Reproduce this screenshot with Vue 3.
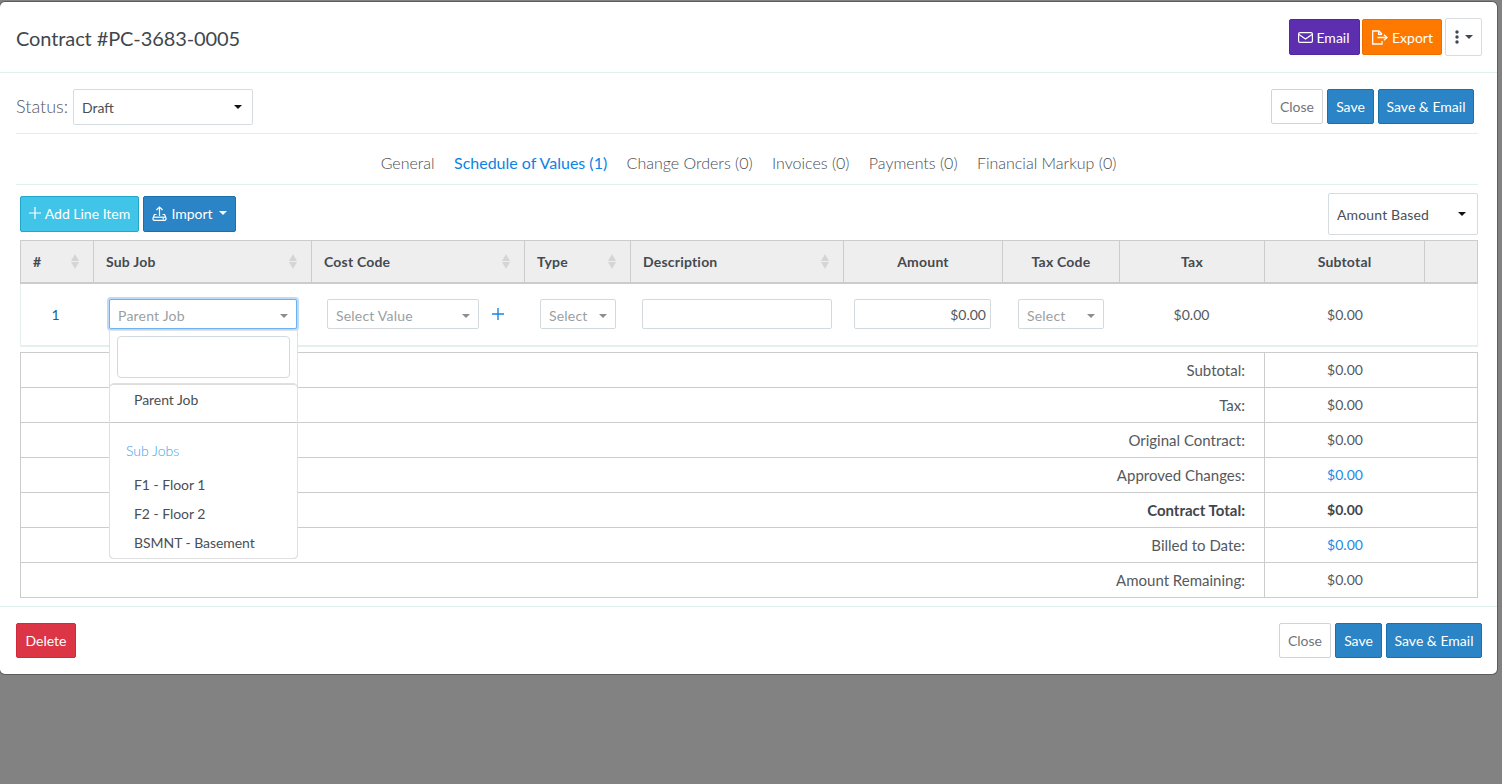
<script setup>
const heads = [
  { label: '#', sort: true },
  { label: 'Sub Job', sort: true },
  { label: 'Cost Code', sort: true },
  { label: 'Type', sort: true },
  { label: 'Description', sort: true },
  { label: 'Amount', center: true },
  { label: 'Tax Code', center: true },
  { label: 'Tax', center: true },
  { label: 'Subtotal', center: true },
  { label: '', center: true }
]
const tabs = ['General', 'Schedule of Values (1)', 'Change Orders (0)', 'Invoices (0)', 'Payments (0)', 'Financial Markup (0)']
const totals = [
  { label: 'Subtotal:', value: '$0.00' },
  { label: 'Tax:', value: '$0.00' },
  { label: 'Original Contract:', value: '$0.00' },
  { label: 'Approved Changes:', value: '$0.00', link: true },
  { label: 'Contract Total:', value: '$0.00', bold: true },
  { label: 'Billed to Date:', value: '$0.00', link: true },
  { label: 'Amount Remaining:', value: '$0.00' }
]
</script>

<template>
  <div class="page">
    <div class="modal">
      <header class="head">
        <h1>Contract #PC-3683-0005</h1>
        <div class="btns">
          <button class="btn purple">
            <svg width="15" height="11" viewBox="0 0 15 11" fill="none" stroke="currentColor" stroke-width="1.2"><rect x="0.6" y="0.6" width="13.8" height="9.8" rx="1.4"/><path d="M1 2.6 7.5 7 14 2.6"/></svg>
            Email
          </button>
          <button class="btn orange">
            <svg width="17" height="15" viewBox="0 0 17 15" fill="none" stroke="currentColor" stroke-width="1.3"><path d="M11 4.2 8 1H1.7v13H11V11"/><path d="M7.6 1v3.4H11"/><path d="M6.5 7.5h9.5M13 4.8l3 2.7-3 2.7"/></svg>
            Export
          </button>
          <button class="btn kebab">
            <svg width="4" height="14" viewBox="0 0 4 14" fill="#3f4752"><circle cx="2" cy="2" r="1.7"/><circle cx="2" cy="7" r="1.7"/><circle cx="2" cy="12" r="1.7"/></svg>
            <i class="caret dark"></i>
          </button>
        </div>
      </header>

      <div class="status-wrap">
        <div class="status">
          <div class="status-left">
            <span class="status-label">Status:</span>
            <div class="select status-select"><span>Draft</span><i class="caret black"></i></div>
          </div>
          <div class="actions">
            <button class="btn close">Close</button>
            <button class="btn blue">Save</button>
            <button class="btn blue">Save &amp; Email</button>
          </div>
        </div>
      </div>

      <nav class="tabs">
        <span v-for="(t, i) in tabs" :key="t" class="tab" :class="{ active: i === 1 }">{{ t }}</span>
      </nav>

      <div class="toolbar">
        <div class="tool-left">
          <button class="btn cyan">
            <svg width="12" height="12" viewBox="0 0 12 12" stroke="currentColor" stroke-width="1.2"><path d="M6 0v12M0 6h12"/></svg>
            Add Line Item
          </button>
          <button class="btn blue import">
            <svg width="15" height="15" viewBox="0 0 15 15" fill="none" stroke="currentColor" stroke-width="1.2"><path d="M7.5 10V1M4.4 4 7.5 1l3.1 3"/><path d="M4.5 8.5H2.4L1 12.3c-.3 1 .3 2 1.4 2h10.2c1.100 0 1.700-1 1.400-2L12.600 8.500H10.500"/><path d="M1.500 11.200h12"/><path d="M10.500 12.800h1.500"/></svg>
            Import
            <i class="caret white"></i>
          </button>
        </div>
        <div class="select basis"><span>Amount Based</span><i class="caret black"></i></div>
      </div>

      <div class="grid-table">
        <div class="row thead">
          <div v-for="(h, i) in heads" :key="i" class="th" :class="{ center: h.center }">
            <span>{{ h.label }}</span>
            <span v-if="h.sort" class="sort"><i></i><i></i></span>
          </div>
        </div>
        <div class="row tbody">
          <div class="td num">1</div>
          <div class="td sub-cell">
            <div class="mini focus"><span>Parent Job</span><i class="caret grey"></i></div>
            <div class="dropdown">
              <div class="search"></div>
              <div class="menu">
                <div class="opt first">Parent Job</div>
                <div class="group">Sub Jobs</div>
                <div class="opt">F1 - Floor 1</div>
                <div class="opt">F2 - Floor 2</div>
                <div class="opt">BSMNT - Basement</div>
              </div>
            </div>
          </div>
          <div class="td cost-cell">
            <div class="mini cost"><span>Select Value</span><i class="caret grey"></i></div>
            <svg class="plus" width="12" height="12" viewBox="0 0 12 12" stroke="#1a86e0" stroke-width="1.4"><path d="M6 0v12M0 6h12"/></svg>
          </div>
          <div class="td type-cell"><div class="mini type"><span>Select</span><i class="caret grey"></i></div></div>
          <div class="td desc-cell"><div class="input desc"></div></div>
          <div class="td amount-cell"><div class="input amount">$0.00</div></div>
          <div class="td tax-code-cell"><div class="mini taxcode"><span>Select</span><i class="caret grey"></i></div></div>
          <div class="td money tax-money">$0.00</div>
          <div class="td money">$0.00</div>
          <div class="td"></div>
        </div>
      </div>

      <div class="totals">
        <div v-for="t in totals" :key="t.label" class="total-row" :class="{ bold: t.bold }">
          <div class="total-label">{{ t.label }}</div>
          <div class="total-value" :class="{ link: t.link }">{{ t.value }}</div>
        </div>
      </div>

      <footer class="foot">
        <button class="btn red">Delete</button>
        <div class="actions">
          <button class="btn close">Close</button>
          <button class="btn blue">Save</button>
          <button class="btn blue">Save &amp; Email</button>
        </div>
      </footer>
    </div>
  </div>
</template>

<style>
html, body { margin: 0; background: #828282; }
</style>

<style scoped>
.page {
  height: 784px;
  padding-top: 2px;
  box-sizing: border-box;
  background: #828282;
  overflow: hidden;
  font-family: Lato, "Open Sans", sans-serif;
  font-size: 14px;
  color: #495057;
}
.modal {
  width: 1497px;
  height: 672px;
  background: #fff;
  border-radius: 5px;
  box-sizing: border-box;
  box-shadow: 0 0 0 1px #5c5c5c;
}
.head {
  height: 71px;
  box-sizing: border-box;
  border-bottom: 1px solid #e0f0ee;
  display: flex;
  justify-content: space-between;
  padding: 16px 15px 0 16px;
}
h1 {
  margin: 0;
  font-size: 20px;
  font-weight: 400;
  line-height: 40px;
  letter-spacing: -0.1px;
  color: #41474e;
}
.btns { display: flex; gap: 2px; align-items: flex-start; }
.btn {
  height: 35px;
  box-sizing: border-box;
  border: 1px solid transparent;
  border-radius: 2px;
  font: 400 14px Lato, sans-serif;
  color: #fff;
  padding: 0 8px;
  display: inline-flex;
  align-items: center;
  gap: 4px;
  white-space: nowrap;
}
.purple { background: #5e2eb1; border-color: #5327a0; width: 71px; height: 36px; margin-top: 1px; justify-content: center; gap: 3px; padding: 0 1px 0 0; }
.orange { background: #ff7900; border-color: #ec7000; width: 80px; height: 36px; margin-top: 1px; justify-content: center; }
.kebab { background: #fff; border-color: #d8dcdf; width: 37px; height: 38px; margin-left: 1px; justify-content: center; gap: 6px; padding: 0 0 0 1px; }
.close { background: #fff; border-color: #d0d4d7; color: #6f757b; width: 52px; justify-content: center; padding: 0; }
.blue { background: #2a84c5; border-color: #1b70ab; justify-content: center; }
.cyan { background: #40c4e8; border-color: #22a6c9; width: 119px; height: 36px; justify-content: center; padding: 0 0 2px; }
.import { width: 93px; height: 36px; padding: 0 0 2px; gap: 4px; }
.red { background: #dc3545; border-color: #cf2b3b; width: 60px; justify-content: center; padding: 0; }
.caret {
  display: inline-block;
  width: 0;
  height: 0;
  border-left: 4px solid transparent;
  border-right: 4px solid transparent;
  border-top: 4px solid #000;
}
.caret.black { border-top-color: #111; }
.caret.dark { border-top-color: #3f4752; }
.caret.white { border-top-color: #fff; margin-left: 2px; }
.caret.grey { border-top-color: #8d8d8d; }
.status-wrap { padding: 0 19px 0 16px; }
.status {
  height: 61px;
  box-sizing: border-box;
  border-bottom: 1px solid #e0f0ee;
  display: flex;
  justify-content: space-between;
  padding-top: 16px;
}
.status-left { display: flex; align-items: flex-start; gap: 4px; }
.status-label { font-size: 18px; font-weight: 300; line-height: 35px; color: #53585e; width: 53px; }
.select {
  box-sizing: border-box;
  background: #fff;
  border: 1px solid #d5dce0;
  border-radius: 2px;
  display: flex;
  align-items: center;
  justify-content: space-between;
}
.status-select { width: 180px; height: 36px; padding: 0 10px 0 8px; }
.actions { display: flex; gap: 4px; padding-right: 4px; }
.actions .btn:nth-child(2) { width: 47px; padding: 0; }
.actions .btn:nth-child(3) { width: 96px; padding: 0; }
.tabs {
  height: 51px;
  box-sizing: border-box;
  margin: 0 19px 0 16px;
  border-bottom: 1px solid #e0f0ee;
  display: flex;
  justify-content: center;
  align-items: center;
  gap: 19.4px;
  font-size: 16px;
  padding: 7px 0 0 3px;
}
.tab { font-weight: 300; color: #474d53; }
.tab.active { color: #0b84e3; font-weight: 400; }
.toolbar {
  height: 55px;
  margin: 0 19px 0 20px;
  display: flex;
  justify-content: space-between;
}
.tool-left { display: flex; gap: 4px; padding-top: 11px; }
.basis { margin-top: 8px; width: 150px; height: 42px; padding: 0 11px 0 8px; letter-spacing: 0.15px; }
.grid-table { margin-left: 20px; width: 1458px; }
.row {
  display: grid;
  grid-template-columns: 73px 218px 213px 106px 213px 159px 117px 145px 160px 53px;
}
.thead {
  height: 44px;
  box-sizing: border-box;
  background: #eee;
  border: 1px solid #ccc;
  border-width: 1px 1px 2px 1px;
}
.th {
  border-right: 1px solid #ccc;
  display: flex;
  align-items: center;
  justify-content: space-between;
  padding: 0 14px 0 12px;
  font-weight: 700;
  letter-spacing: 0.2px;
  color: #454a50;
}
.th:last-child { border-right: 0; }
.th.center { justify-content: center; padding: 0; }
.sort { display: flex; flex-direction: column; gap: 1px; }
.sort i {
  display: block;
  width: 0;
  height: 0;
  border-left: 4px solid transparent;
  border-right: 4px solid transparent;
  border-bottom: 7px solid #d5d5d5;
}
.sort i:last-child { border-bottom: 0; border-top: 7px solid #d5d5d5; }
.tbody {
  height: 63px;
  box-sizing: border-box;
  border: 1px solid #e3f1ea;
  border-width: 0 1px 2px 1px;
}
.td { display: flex; align-items: center; position: relative; }
.num { justify-content: center; padding-right: 4px; color: #1c5f93; }
.sub-cell, .cost-cell, .type-cell, .tax-code-cell { padding-left: 15px; align-items: flex-start; padding-top: 15px; }
.desc-cell { padding-left: 11px; align-items: flex-start; padding-top: 15px; }
.amount-cell { padding-left: 10px; align-items: flex-start; padding-top: 15px; }
.money { justify-content: center; color: #53595f; }
.tax-money { padding-right: 2px; }
.mini {
  box-sizing: border-box;
  height: 30px;
  border: 1px solid #d3dade;
  border-radius: 2px;
  background: #fff;
  color: #9a9fa3;
  display: flex;
  align-items: center;
  justify-content: space-between;
  padding: 2px 8px 0 8px;
  letter-spacing: 0.2px;
}
.mini .caret { margin-top: 1px; }
.focus {
  width: 188px;
  border-color: #6eb1f2;
  box-shadow: 0 0 0 2px #bcdafb;
}
.cost { width: 152px; }
.plus { margin: 9px 0 0 13px; }
.type { width: 76px; }
.taxcode { width: 86px; }
.input {
  box-sizing: border-box;
  height: 30px;
  border: 1px solid #d3dade;
  border-radius: 2px;
  background: #fff;
}
.desc { width: 190px; }
.amount { width: 137px; text-align: right; padding: 1px 4px 0; line-height: 28px; color: #53595f; }
.dropdown {
  position: absolute;
  left: 15px;
  top: 46px;
  width: 189px;
  height: 229px;
  box-sizing: border-box;
  background: #fff;
  border: 1px solid #dfe2e5;
  border-radius: 0 0 4px 4px;
  z-index: 3;
  padding-top: 5px;
}
.search {
  width: 173px;
  height: 42px;
  margin-left: 7px;
  box-sizing: border-box;
  border: 1px solid #d3dade;
  border-radius: 4px;
}
.menu {
  margin-top: 6px;
  box-sizing: border-box;
  border-top: 1px solid #dcdcdc;
  border-radius: 4px;
  box-shadow: 0 0 0 1px #e0e0e0;
  height: 174px;
  color: #4a4f55;
}
.opt { height: 29px; line-height: 29px; padding-left: 24px; font-size: 14px; letter-spacing: -0.05px; }
.opt.first { height: 38px; line-height: 30px; border-bottom: 1px solid #c8c8c8; box-sizing: border-box; }
.group { color: #3b9eec; font-weight: 300; font-size: 14px; padding: 19px 0 0 16px; height: 47px; box-sizing: border-box; }
.totals {
  margin: 5px 0 0 20px;
  width: 1458px;
  box-sizing: border-box;
  border: 1px solid #ccc;
  border-bottom: 0;
}
.total-row {
  display: grid;
  grid-template-columns: 1244px 1fr;
  height: 35px;
  box-sizing: border-box;
  border-bottom: 1px solid #ccc;
  color: #55595e;
  align-items: center;
}
.total-label { text-align: right; font-size: 15px; padding-right: 19px; line-height: 34px; border-right: 1px solid #ccc; }
.total-value { text-align: center; width: 160px; padding-bottom: 2px; }
.link { color: #1a8ae5; }
.bold { font-weight: 700; color: #42464b; }
.foot {
  margin-top: 8px;
  border-top: 1px solid #e0f0ee;
  display: flex;
  justify-content: space-between;
  padding: 16px 15px 0 16px;
  height: 68px;
  box-sizing: border-box;
}
.foot .actions { padding-right: 0; }
</style>
